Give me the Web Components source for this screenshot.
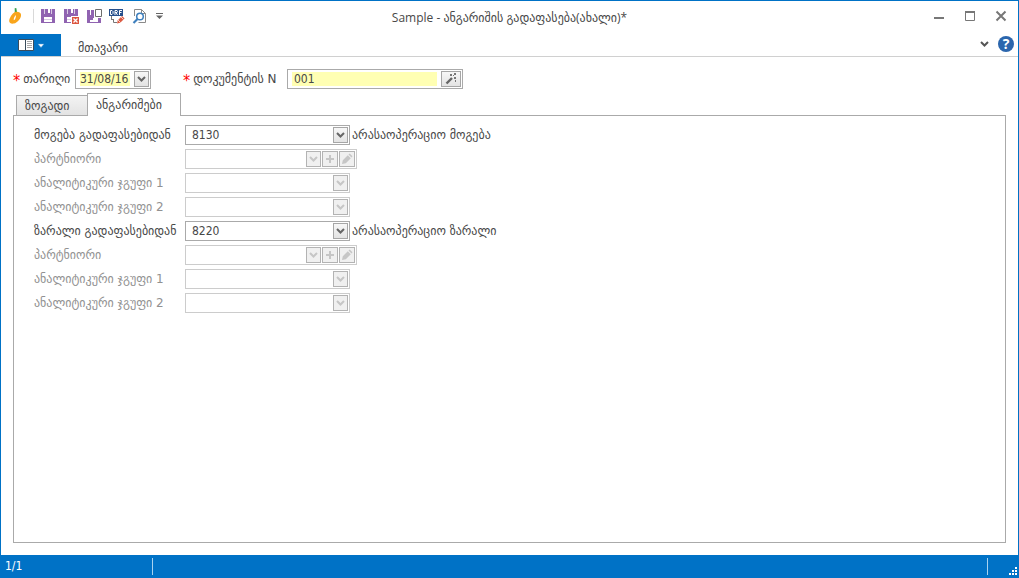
<!DOCTYPE html>
<html lang="ka">
<head>
<meta charset="utf-8">
<title>Sample - ანგარიშის გადაფასება</title>
<style>
html, body { height: 100%; margin: 0; }
body { font: 12px/20px "DejaVu Sans", sans-serif; color: #484848; background: #fff; }
</style>
</head>
<body>
<app-window>
  <title-bar slot="title">Sample - ანგარიშის გადაფასება(ახალი)*</title-bar>
  <ribbon-bar slot="ribbon">მთავარი</ribbon-bar>
  <document-header slot="header"></document-header>
  <tab-panel slot="content">
    <account-row label="მოგება გადაფასებიდან" value="8130">არასაოპერაციო მოგება</account-row>
    <account-row label="პარტნიორი" kind="partner" disabled></account-row>
    <account-row label="ანალიტიკური ჯგუფი 1" disabled></account-row>
    <account-row label="ანალიტიკური ჯგუფი 2" disabled></account-row>
    <account-row label="ზარალი გადაფასებიდან" value="8220">არასაოპერაციო ზარალი</account-row>
    <account-row label="პარტნიორი" kind="partner" disabled></account-row>
    <account-row label="ანალიტიკური ჯგუფი 1" disabled></account-row>
    <account-row label="ანალიტიკური ჯგუფი 2" disabled></account-row>
  </tab-panel>
  <status-bar slot="status">1/1</status-bar>
</app-window>

<script>
const RESET = `
  :host, *, *::before, *::after { box-sizing: border-box; }
  button, input, select { font: inherit; color: inherit; margin: 0; padding: 0; border: 0; border-radius: 0; background: none; outline: 0; }
  svg { display: block; flex: none; }
`;
const FIELD = `
  .field { display: flex; align-items: stretch; gap: 1px; height: 20px; padding: 1px; border: 1px solid #aaa; background: #fff; font-family: "DejaVu Sans Condensed", "DejaVu Sans", sans-serif; }
  .btn { display: flex; align-items: center; justify-content: center; flex: none; width: 15px; border: 1px solid #a6a6a6; background: linear-gradient(#f7f7f7, #e3e3e3); color: #666; }
  .btn.plus, .btn.edit { width: 16px; }
`;
const CHEVRON = `<svg width="9" height="8" viewBox="0 0 9 8" aria-hidden="true"><path d="M1 2 4.500 5.500 8 2" fill="none" stroke="currentColor" stroke-width="2"/></svg>`;

function define(name, css, render) {
  customElements.define(name, class extends HTMLElement {
    connectedCallback() {
      if (this.shadowRoot) return;
      this.attachShadow({ mode: 'open' }).innerHTML = `<style>${RESET}${css}</style>${render(this)}`;
    }
  });
}

define('app-window', `
  :host { display: flex; flex-direction: column; min-height: 100vh; border: 1px solid #0072c6; border-bottom: 0; background: #fff; }
  main { flex: 1; display: flex; flex-direction: column; padding: 12px 12px; }
  slot[name=content] { display: contents; }
`, () => `
  <slot name="title"></slot><slot name="ribbon"></slot>
  <main><slot name="header"></slot><slot name="content"></slot></main>
  <slot name="status"></slot>`);

define('title-bar', `
  :host { display: grid; grid-template-columns: 1fr auto 1fr; align-items: center; height: 33px; }
  .tools { display: flex; align-items: center; gap: 7px; padding: 0 0 3px 6px; }
  .logo { margin-right: 2px; }
  .sep { width: 1px; height: 14px; background: #d9d9d9; margin-right: -1px; }
  .window { display: flex; justify-content: flex-end; align-items: center; gap: 15px; padding: 0 9px 3px 0; }
  h1 { margin: 0; font: 12px/20px "Open Sans", "DejaVu Sans", sans-serif; }
`, () => `
  <div class="tools">
    <svg class="logo" width="17" height="18" viewBox="0 0 17 18" aria-hidden="true">
      <path d="M7.700 1.200 9.300 1l.8 5-2.300.2Z" fill="#35a04a"/>
      <path d="M8 5C5.300 6.200 2 11.500 2.200 14.300 2.400 16.300 4.600 17 6.800 16.500 10.500 15.700 14.600 11 14 7.400 13.700 5.300 11 4.400 8 5Z" fill="#f9a51b"/>
      <path d="M8.800 8C7.500 9.500 6.400 11.500 6.800 13.300 8.500 12.500 9.200 10 8.800 8Z" fill="#fff"/>
    </svg>
    <span class="sep"></span>
    <button aria-label="Save"><svg width="16" height="16" viewBox="0 0 16 16"><path d="M1 1h14v14H1Z" fill="#9063b1"/><path d="M8 1h2v4H8ZM4 9h8v5H4Z" fill="#fff"/><path d="M4 11h8v1H4ZM4 1h1v5H4ZM11 1h1v5h-1Z" fill="#d9cbe4"/></svg></button>
    <button aria-label="Save and close"><svg width="16" height="16" viewBox="0 0 16 16"><path d="M1 1h14v14H1Z" fill="#9063b1"/><path d="M8 1h2v4H8ZM4 9h6v5H4Z" fill="#fff"/><path d="M4 11h5v1H4ZM4 1h1v5H4ZM11 1h1v5h-1Z" fill="#d9cbe4"/><path d="M8 8h8v8H8Z" fill="#fff"/><path d="M9 9h7v7H9Z" fill="#dc5640"/><path d="m10.500 10.500 4 4m0-4-4 4" stroke="#fff" stroke-width="1.300"/></svg></button>
    <button aria-label="Save and new"><svg width="16" height="16" viewBox="0 0 16 16"><path d="M1 2h3v5h11v8H1Z" fill="#9063b1"/><path d="M5 2h3v5H5Z" fill="#9063b1"/><path d="M4 10h8v4H4Z" fill="#fff"/><path d="M4 10h3v2H4Z" fill="#9063b1"/><path d="M8 0h8v10H8Z" fill="#fff"/><path d="M9.500 1.500h6v7h-6Z" fill="#fff" stroke="#6d6d6d"/></svg></button>
    <button aria-label="Draft"><svg width="16" height="16" viewBox="0 0 16 16"><path d="M0 1h14v7H0Z" fill="#27508c"/><path d="M1.500 2.500h1.500l1 1v2l-1 1H1.500ZM6 7V2.500h2l.5 1-.5 1H6m1 0L8.500 7M10.500 7V2.500H13M10.500 4.500h2" fill="none" stroke="#fff"/><path d="M2.500 8v3M2 11.500h3M4.500 11.500v3H8" fill="none" stroke="#777"/><path d="m8 15.500.8-3.300L13 8l2.600 2.500-4.400 4.300Z" fill="#dc5b43"/><path d="m9 12 2.500 2.500M12 9l2.500 2.500" stroke="#fff" stroke-width=".7"/></svg></button>
    <button aria-label="Preview"><svg width="16" height="16" viewBox="0 0 16 16"><path d="M2.500 8V1.500h7l4 4v9h-7M9.500 1.500v4h4" fill="#fff" stroke="#8a8a8a"/><circle cx="8" cy="8.500" r="3.300" fill="#fff" stroke="#3d7fbd" stroke-width="1.500"/><path d="m5.500 11-4 4" stroke="#3d7fbd" stroke-width="2.200"/></svg></button>
    <button aria-label="Customize toolbar"><svg width="9" height="8" viewBox="0 0 9 8"><path d="M1 1h7v1H1ZM1 3.500h7L4.500 7Z" fill="#666"/></svg></button>
  </div>
  <h1><slot></slot></h1>
  <div class="window">
    <button aria-label="Minimize"><svg width="16" height="16" viewBox="0 0 16 16"><path d="M3 9h10v2H3Z" fill="#777"/></svg></button>
    <button aria-label="Maximize"><svg width="16" height="16" viewBox="0 0 16 16"><path d="M3.500 3.500h9v9h-9Z" fill="none" stroke="#777"/><path d="M3 3h10v2H3Z" fill="#777"/></svg></button>
    <button aria-label="Close"><svg width="16" height="16" viewBox="0 0 16 16"><path d="m3.500 3.500 9 9m0-9-9 9" stroke="#777" stroke-width="2"/></svg></button>
  </div>`);

define('ribbon-bar', `
  :host { display: flex; align-items: stretch; height: 23px; border-bottom: 1px solid #d0d0d0; }
  .menu { display: flex; align-items: center; justify-content: center; gap: 3px; width: 60px; background: #0072c6; }
  .tab { padding: 4px 17px 0; line-height: 20px; }
  .end { display: flex; align-items: center; gap: 9px; margin-left: auto; padding: 0 4px 2px 0; color: #555; }
  .help { font: bold 14px/16px "Open Sans", sans-serif; width: 16px; height: 16px; border-radius: 50%; background: #2b66ad; color: #fff; }
`, () => `
  <button class="menu" aria-label="Application menu">
    <svg width="16" height="14" viewBox="0 0 16 14"><path d="M.5 1.500h15v11H.5Z" fill="#fff" stroke="#3a4c5c"/><path d="M7 1h1v12H7Z" fill="#3a4c5c"/><path d="M9 3h5v1H9Zm0 2h5v1H9Zm0 2h5v1H9Zm0 2h5v1H9Z" fill="#a8a8a8"/></svg>
    <svg width="8" height="7" viewBox="0 0 8 7"><path d="M1 2h6L4 5.500Z" fill="#fff" stroke="#4a9bd8" stroke-width=".5"/></svg>
  </button>
  <button class="tab"><slot></slot></button>
  <div class="end"><button aria-label="Collapse ribbon">${CHEVRON}</button><button class="help" aria-label="Help">?</button></div>`);

define('document-header', `
  ${FIELD}
  :host { display: flex; align-items: center; height: 20px; margin-bottom: 4px; }
  label { white-space: nowrap; }
  label::before { content: "*"; color: #f00; font-family: "DejaVu Sans Condensed", sans-serif; font-size: 16px; line-height: 18px; vertical-align: -3px; margin-right: 3px; }
  .date-label { width: 62px; }
  .date { width: 76px; margin-right: 32px; }
  .number-label { width: 104px; }
  .number { width: 176px; }
  input { flex: 1; min-width: 0; height: 14px; margin: 1px 3px; line-height: 14px; background: #ffffb3; }
  .number input { margin: 1px 3px; padding-left: 2px; }
  .wand { width: 20px; }
`, () => `
  <label class="date-label" for="date">თარიღი</label>
  <div class="field date"><input id="date" value="31/08/16"><button class="btn" aria-label="Open calendar">${CHEVRON}</button></div>
  <label class="number-label" for="number">დოკუმენტის N</label>
  <div class="field number"><input id="number" value="001"><button class="btn wand" aria-label="Generate number">
    <svg width="12" height="12" viewBox="0 0 12 12"><path d="M1.500 10.500 7 5" stroke="#666" stroke-width="2.400"/><path d="M5 1h2v2H5ZM8 2h1v1H8ZM9 0h2v2H9ZM9 4h2v2H9ZM10 7h1v2h-1Z" fill="#777"/></svg></button></div>`);

define('tab-panel', `
  :host { flex: 1; display: flex; flex-direction: column; }
  .tabs { display: flex; align-items: flex-end; height: 23px; padding-left: 3px; margin-bottom: -1px; position: relative; }
  .tabs button { border: 1px solid #aaa; padding: 0 8px; text-align: left; white-space: nowrap; }
  .tabs .idle { width: 72px; height: 21px; margin-right: -1px; background: linear-gradient(#f3f3f3, #e3e3e3); }
  .tabs .active { width: 94px; height: 23px; background: #fff; border-bottom: 0; }
  .body { flex: 1; display: flex; flex-direction: column; gap: 4px; padding: 9px 20px; border: 1px solid #aaa; }
`, () => `
  <div class="tabs" role="tablist"><button role="tab" class="idle" aria-selected="false">ზოგადი</button><button role="tab" class="active" aria-selected="true">ანგარიშები</button></div>
  <div class="body" role="tabpanel"><slot></slot></div>`);

define('account-row', `
  ${FIELD}
  :host { display: flex; align-items: center; height: 20px; white-space: nowrap; }
  :host([disabled]) { color: #919191; }
  label { width: 151px; }
  .field { width: 165px; margin-right: 2px; }
  :host([kind=partner]) .field { width: 172px; }
  select { appearance: none; flex: 1; min-width: 0; padding-left: 5px; line-height: 16px; opacity: 1; }
  :host([disabled]) .field { border-color: #ccc; }
  :host([disabled]) .btn { border-color: #b3b3b3; color: #c6c6c6; background: #f0f0f0; }
`, el => {
  const off = el.hasAttribute('disabled') ? 'disabled' : '';
  const value = el.getAttribute('value') || '';
  const extra = el.getAttribute('kind') === 'partner' ? `
    <button class="btn plus" ${off} aria-label="Add"><svg width="10" height="10" viewBox="0 0 10 10"><path d="M4 1h2v3h3v2H6v3H4V6H1V4h3Z" fill="currentColor"/></svg></button>
    <button class="btn edit" ${off} aria-label="Edit"><svg width="12" height="12" viewBox="0 0 12 12"><path d="m1 11 .8-3.800L6.800 2.200 9.800 5.200 4.800 10.200ZM7.500 1.500 8.700.5 11.500 3.300l-1 1.200Z" fill="currentColor"/></svg></button>` : '';
  return `
    <label for="account">${el.getAttribute('label')}</label>
    <div class="field"><select id="account" ${off}><option>${value}</option></select><button class="btn" ${off} aria-label="Open list">${CHEVRON}</button>${extra}</div>
    <span><slot></slot></span>`;
});

define('status-bar', `
  :host { display: flex; align-items: center; height: 23px; background: #0072c6; color: #fff; font-family: "DejaVu Sans Condensed", "DejaVu Sans", sans-serif; }
  .page { width: 152px; padding-left: 4px; border-right: 1px solid #a8d2f0; height: 17px; line-height: 17px; }
  .end { margin-left: auto; display: flex; align-items: flex-end; justify-content: flex-end; width: 31px; height: 17px; border-left: 1px solid #a8d2f0; }
`, () => `
  <div class="page"><slot></slot></div>
  <div class="end"><svg width="9" height="8" viewBox="0 0 9 8" aria-hidden="true"><path d="M6 0h2v2H6ZM6 3h2v2H6ZM3 3h2v2H3ZM0 6h2v2H0ZM3 6h2v2H3ZM6 6h2v2H6Z" fill="#fff"/></svg></div>`);
</script>
</body>
</html>
